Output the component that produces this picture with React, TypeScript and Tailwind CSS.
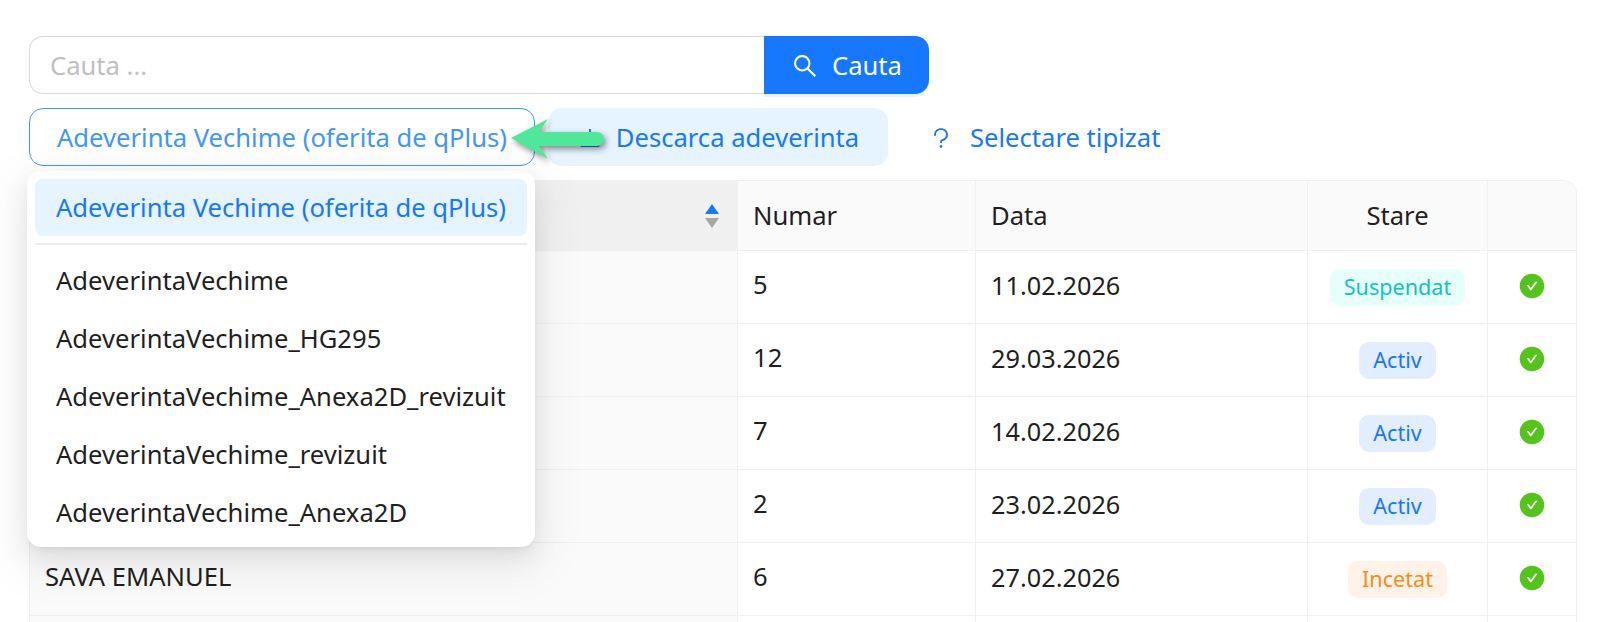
import React from 'react';
import { AiFillCheckCircle, AiOutlineDownload, AiOutlineQuestion, AiOutlineSearch } from 'react-icons/ai';

const options = [
  'AdeverintaVechime',
  'AdeverintaVechime_HG295',
  'AdeverintaVechime_Anexa2D_revizuit',
  'AdeverintaVechime_revizuit',
  'AdeverintaVechime_Anexa2D',
];

const tagStyles = {
  Suspendat: 'bg-[#e6fffb] text-[#13c2c2]',
  Activ: 'bg-[#e2eefd] text-[#1677ff]',
  Incetat: 'bg-[#fff2e8] text-[#fa8c16]',
};

const rows: { name: string; numar: string; data: string; stare: keyof typeof tagStyles }[] = [
  { name: '', numar: '5', data: '11.02.2026', stare: 'Suspendat' },
  { name: '', numar: '12', data: '29.03.2026', stare: 'Activ' },
  { name: '', numar: '7', data: '14.02.2026', stare: 'Activ' },
  { name: '', numar: '2', data: '23.02.2026', stare: 'Activ' },
  { name: 'SAVA EMANUEL', numar: '6', data: '27.02.2026', stare: 'Incetat' },
];

export default function App() {
  return (
    <div className="relative h-[622px] overflow-hidden bg-white pl-[29px] pr-[41px] pt-[36px] font-['Noto_Sans',sans-serif] text-[25.6px] text-[#1f1f1f]">
      <div className="flex h-[58px] w-[900px]">
        <div className="flex flex-1 items-center rounded-l-[14px] border border-r-0 border-[#d9d9d9] pl-[20px] pt-[2px] text-[#bfbfbf]">
          Cauta ...
        </div>
        <button className="flex w-[165px] items-center justify-center gap-[13px] rounded-r-[14px] bg-[#1677ff] pt-[2px] text-white shadow-[0_3px_0_rgba(5,145,255,0.1)]">
          <AiOutlineSearch className="size-[28px]" />
          Cauta
        </button>
      </div>

      <div className="mt-[14px] flex h-[58px] items-center gap-[13px]">
        <div className="flex h-full w-[506px] items-center rounded-[14px] border border-[#4096ff] pl-[27px] pt-[2px] text-[#4096ff]">
          Adeverinta Vechime (oferita de qPlus)
        </div>
        <button className="flex h-full w-[340px] items-center justify-center gap-[13px] rounded-[14px] bg-[#e6f4ff] pt-[2px] text-[#1677ff]">
          <AiOutlineDownload className="size-[26px]" />
          Descarca adeverinta
        </button>
        <button className="ml-[27px] flex h-full items-center gap-[16px] pt-[2px] text-[#1677ff]">
          <AiOutlineQuestion className="size-[26px]" />
          Selectare tipizat
        </button>
      </div>

      <div className="mt-[14px] overflow-hidden rounded-t-[14px] border-l border-r border-t border-[#f0f0f0]">
        <div className="grid grid-cols-[708px_238px_332px_180px_1fr]">
          <div className="flex h-[70px] items-center justify-end border-b border-r border-[#f0f0f0] bg-[#f0f0f0] pr-[17px]">
            <svg width="16" height="30" viewBox="0 0 16 30">
              <path d="M8 3 L15 13 L1 13 Z" fill="#1677ff" />
              <path d="M8 27 L15 17 L1 17 Z" fill="#a6a6a6" />
            </svg>
          </div>
          <div className="flex h-[70px] items-center border-b border-r border-[#f0f0f0] bg-[#fafafa] pl-[15px] pt-[2px]">Numar</div>
          <div className="flex h-[70px] items-center border-b border-r border-[#f0f0f0] bg-[#fafafa] pl-[15px] pt-[2px]">Data</div>
          <div className="flex h-[70px] items-center justify-center border-b border-r border-[#f0f0f0] bg-[#fafafa] pt-[2px]">Stare</div>
          <div className="h-[70px] border-b border-[#f0f0f0] bg-[#fafafa]" />

          {rows.map((row) => (
            <React.Fragment key={row.data}>
              <div className="flex h-[73px] items-center border-b border-r border-[#f0f0f0] bg-[#fafafa] pb-[3px] pl-[15px]">{row.name}</div>
              <div className="flex h-[73px] items-center border-b border-r border-[#f0f0f0] pb-[3px] pl-[15px]">{row.numar}</div>
              <div className="flex h-[73px] items-center border-b border-r border-[#f0f0f0] pb-[3px] pl-[15px] text-[25.3px]">{row.data}</div>
              <div className="flex h-[73px] items-center justify-center border-b border-r border-[#f0f0f0] pt-[1px]">
                <span className={`flex h-[37px] items-center rounded-[10px] px-[14px] text-[21.6px] ${tagStyles[row.stare]}`}>{row.stare}</span>
              </div>
              <div className="flex h-[73px] items-center justify-center border-b border-[#f0f0f0] pb-[2px]">
                <AiFillCheckCircle className="size-[28px] text-[#52c41a]" />
              </div>
            </React.Fragment>
          ))}
          <div className="h-[73px] border-r border-[#f0f0f0] bg-[#fafafa]" />
          <div className="h-[73px] border-r border-[#f0f0f0]" />
          <div className="h-[73px] border-r border-[#f0f0f0]" />
          <div className="h-[73px] border-r border-[#f0f0f0]" />
          <div className="h-[73px]" />
        </div>
      </div>

      {/* open dropdown */}
      <div className="absolute left-[27px] top-[171px] w-[508px] rounded-[14px] bg-white px-[8px] pb-[5px] pt-[8px] shadow-[0_10px_26px_rgba(0,0,0,0.08),0_5px_10px_-6px_rgba(0,0,0,0.12),0_14px_45px_13px_rgba(0,0,0,0.05)]">
        <div className="flex h-[57px] items-center rounded-[8px] bg-[#e6f4ff] pl-[21px] pt-[2px] text-[#1677ff]">
          Adeverinta Vechime (oferita de qPlus)
        </div>
        <div className="my-[7px] h-[2px] bg-[#ececec]" />
        {options.map((opt) => (
          <div key={opt} className="flex h-[58px] items-center pl-[21px]">
            {opt}
          </div>
        ))}
      </div>

      {/* callout arrow */}
      <svg className="absolute left-[505px] top-[113px]" width="110" height="54" viewBox="0 0 110 54" style={{ filter: 'drop-shadow(2px 3px 3px rgba(0,0,0,0.45))' }}>
        <path d="M6 25 L43 6 L34 19 L92 19 A7 7 0 0 1 92 33 L34 33 L43 46 Z" fill="#4fe89a" />
      </svg>
    </div>
  );
}
